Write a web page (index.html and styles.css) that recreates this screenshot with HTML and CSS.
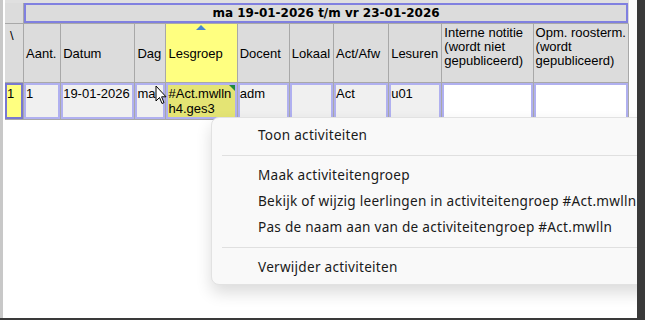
FILE: index.html
```html
<!DOCTYPE html>
<html lang="nl">
    <head>
        <meta charset="UTF-8">
        <title>Activiteiten</title>
        <link rel="stylesheet" href="styles.css">
    </head>
    <body>
        <div class="window">
            <div class="pane">
                <table class="grid">
                    <colgroup>
                        <col style="width:19px">
                        <col style="width:37px">
                        <col style="width:74px">
                        <col style="width:31px">
                        <col style="width:71px">
                        <col style="width:52px">
                        <col style="width:44px">
                        <col style="width:55px">
                        <col style="width:53px">
                        <col style="width:91px">
                        <col style="width:95px">
                    </colgroup>
                    <tr class="title-row">
                        <td class="corner"></td>
                        <td class="title" colspan="10">ma 19-01-2026 t/m vr 23-01-2026</td>
                    </tr>
                    <tr class="head-row">
                        <th class="slash">\</th>
                        <th>Aant.</th>
                        <th>Datum</th>
                        <th>Dag</th>
                        <th class="sorted">Lesgroep<span class="sort-mark"></span></th>
                        <th>Docent</th>
                        <th>Lokaal</th>
                        <th>Act/Afw</th>
                        <th>Lesuren</th>
                        <th class="top">Interne notitie (wordt niet gepubliceerd)</th>
                        <th class="top">Opm. roosterm. (wordt gepubliceerd)</th>
                    </tr>
                    <tr class="data-row">
                        <td class="rownr">1</td>
                        <td>1</td>
                        <td>19-01-2026</td>
                        <td>ma</td>
                        <td class="group">#Act.mwlln h4.ges3<span class="flag"></span></td>
                        <td>adm</td>
                        <td></td>
                        <td>Act</td>
                        <td>u01</td>
                        <td class="empty"></td>
                        <td class="empty"></td>
                    </tr>
                </table>

                <!-- muiscursor -->
                <svg class="cursor" width="12" height="20" viewBox="0 0 12 20">
                    <path d="M1 1 L1 16 L4.5 12.5 L7 18.5 L9 17.6 L6.6 11.8 L11 11.8 Z" fill="#fff" stroke="#000" stroke-width="1" stroke-linejoin="round"/>
                </svg>

                <ul class="menu">
                    <li>Toon activiteiten</li>
                    <li class="sep"></li>
                    <li>Maak activiteitengroep</li>
                    <li>Bekijk of wijzig leerlingen in activiteitengroep #Act.mwlln</li>
                    <li>Pas de naam aan van de activiteitengroep #Act.mwlln</li>
                    <li class="sep"></li>
                    <li>Verwijder activiteiten</li>
                </ul>
            </div>
            <div class="edge"></div>
        </div>
    </body>
</html>
```

FILE: styles.css
```css
body {
    margin: 0;
    background-color: #3a3a3a;
    font-family: 'Liberation Sans', Arial, sans-serif;
}

.window {
    display: flex;
    width: 645px;
    height: 318px;
}

.pane {
    position: relative;
    width: 634px;
    height: 318px;
    overflow: hidden;
    background-color: #fff;
    border-left: 3px solid #c8c8c8;
}

.edge {
    flex: 1;
    background-color: #3a3a3a;
}

.grid {
    table-layout: fixed;
    width: 624px;
    border-collapse: separate;
    border-spacing: 0;
    margin-left: 2px;
    border-top: 3px solid #e0e0e0;
    font-size: 13px;
    color: #000;
}

.grid td,
.grid th {
    padding: 0 2px;
    border-right: 1px solid #a8a8a8;
    border-bottom: 1px solid #a8a8a8;
    overflow: hidden;
    white-space: nowrap;
    font-weight: normal;
    text-align: left;
}

.title-row td {
    height: 20px;
    background-color: #dcdcdc;
}

.title-row .title {
    font-family: 'DejaVu Sans', Verdana, sans-serif;
    font-weight: bold;
    font-size: 12px;
    text-align: center;
    box-shadow: inset 0 0 0 2px #8080e0;
    border-right-color: #dcdcdc;
}

.head-row th {
    height: 54px;
    background-color: #dcdcdc;
    vertical-align: middle;
}

.head-row .slash {
    vertical-align: top;
    padding: 4px 0 0 5px;
}

.head-row .top {
    vertical-align: top;
    white-space: normal;
    line-height: 14px;
    padding-top: 2px;
}

.head-row .sorted {
    position: relative;
    background-color: #ffff80;
}

.sort-mark {
    position: absolute;
    top: 1px;
    left: 30px;
    border-left: 5px solid transparent;
    border-right: 5px solid transparent;
    border-bottom: 5px solid #4a88d0;
}

.data-row td {
    height: 37px;
    vertical-align: top;
    padding-top: 3px;
    box-sizing: border-box;
    background-color: #f0f0f0;
    box-shadow: inset 0 0 0 2px #b0b0f0;
    line-height: 15px;
}

.data-row .rownr {
    background-color: #ffff80;
    box-shadow: inset 0 0 0 2px #7878d0;
}

.data-row .group {
    position: relative;
    white-space: normal;
    word-break: break-all;
    background-color: #e4e474;
}

.flag {
    position: absolute;
    top: 2px;
    right: 2px;
    border-left: 6px solid transparent;
    border-top: 6px solid #1e8a3c;
}

.data-row .empty {
    background-color: #fff;
}

.cursor {
    position: absolute;
    top: 85px;
    left: 152px;
}

.menu {
    position: absolute;
    top: 117px;
    left: 208px;
    width: 440px;
    margin: 0;
    padding: 4px 0;
    list-style: none;
    background-color: #f9f9f9;
    border: 1px solid #e2e2e2;
    border-radius: 8px;
    box-shadow: 0 8px 16px rgba(0, 0, 0, 0.14);
    font-family: 'Noto Sans', 'Open Sans', sans-serif;
    font-size: 13.6px;
    letter-spacing: 0.25px;
    color: #1a1a1a;
}

.menu li {
    height: 26px;
    line-height: 26px;
    padding-left: 46px;
    white-space: nowrap;
}

.menu li.sep {
    height: 1px;
    margin: 7px 0 6px 10px;
    padding: 0;
    background-color: #e0e0e0;
}
```
